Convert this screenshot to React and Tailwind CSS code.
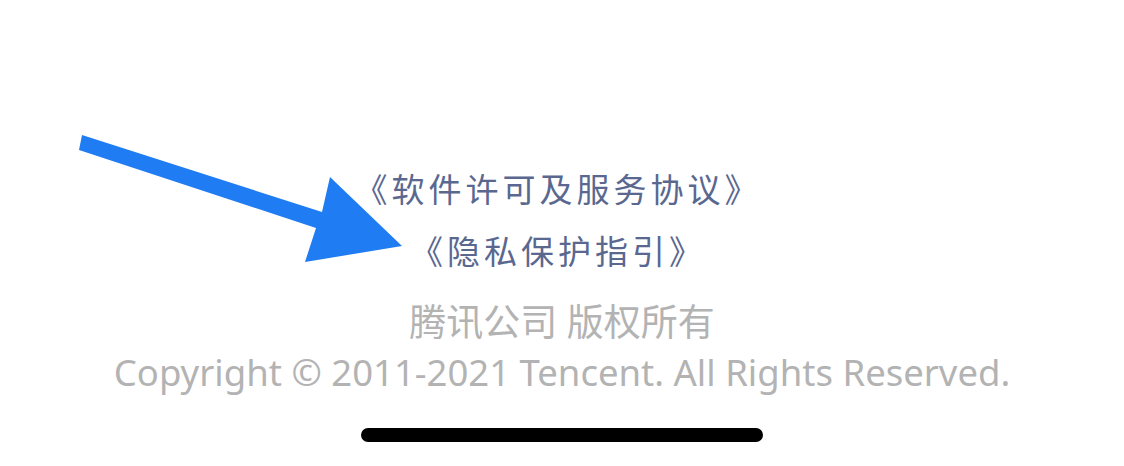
export default function App() {
  return (
    <div className="relative w-[1124px] h-[466px] bg-white overflow-hidden" style={{ fontFamily: '"Noto Sans", "Noto Sans CJK SC", sans-serif' }}>
      <div className="flex flex-col items-center pt-[166px]">
        <a className="mr-[8px] text-[33px] leading-[48px] tracking-[4px] text-[#5a6890]">《软件许可及服务协议》</a>
        <a className="mt-[14px] mr-[8px] text-[33px] leading-[48px] tracking-[4px] text-[#5a6890]">《隐私保护指引》</a>
        <p className="mt-[24px] text-[37px] leading-[44px] text-[#b3b3b3]">腾讯公司 版权所有</p>
        <p className="mt-[6px] text-[36.5px] leading-[44px] text-[#b3b3b3]">Copyright © 2011-2021 Tencent. All Rights Reserved.</p>
        <div className="mt-[34px] w-[402px] h-[14px] rounded-full bg-black" />
      </div>
      <svg className="absolute left-0 top-0" width="1124" height="466" viewBox="0 0 1124 466">
        <polygon points="82,135 322,212 330,177 402,246 305,262 316,228 79,150" fill="#1f7cf2" />
      </svg>
    </div>
  );
}
